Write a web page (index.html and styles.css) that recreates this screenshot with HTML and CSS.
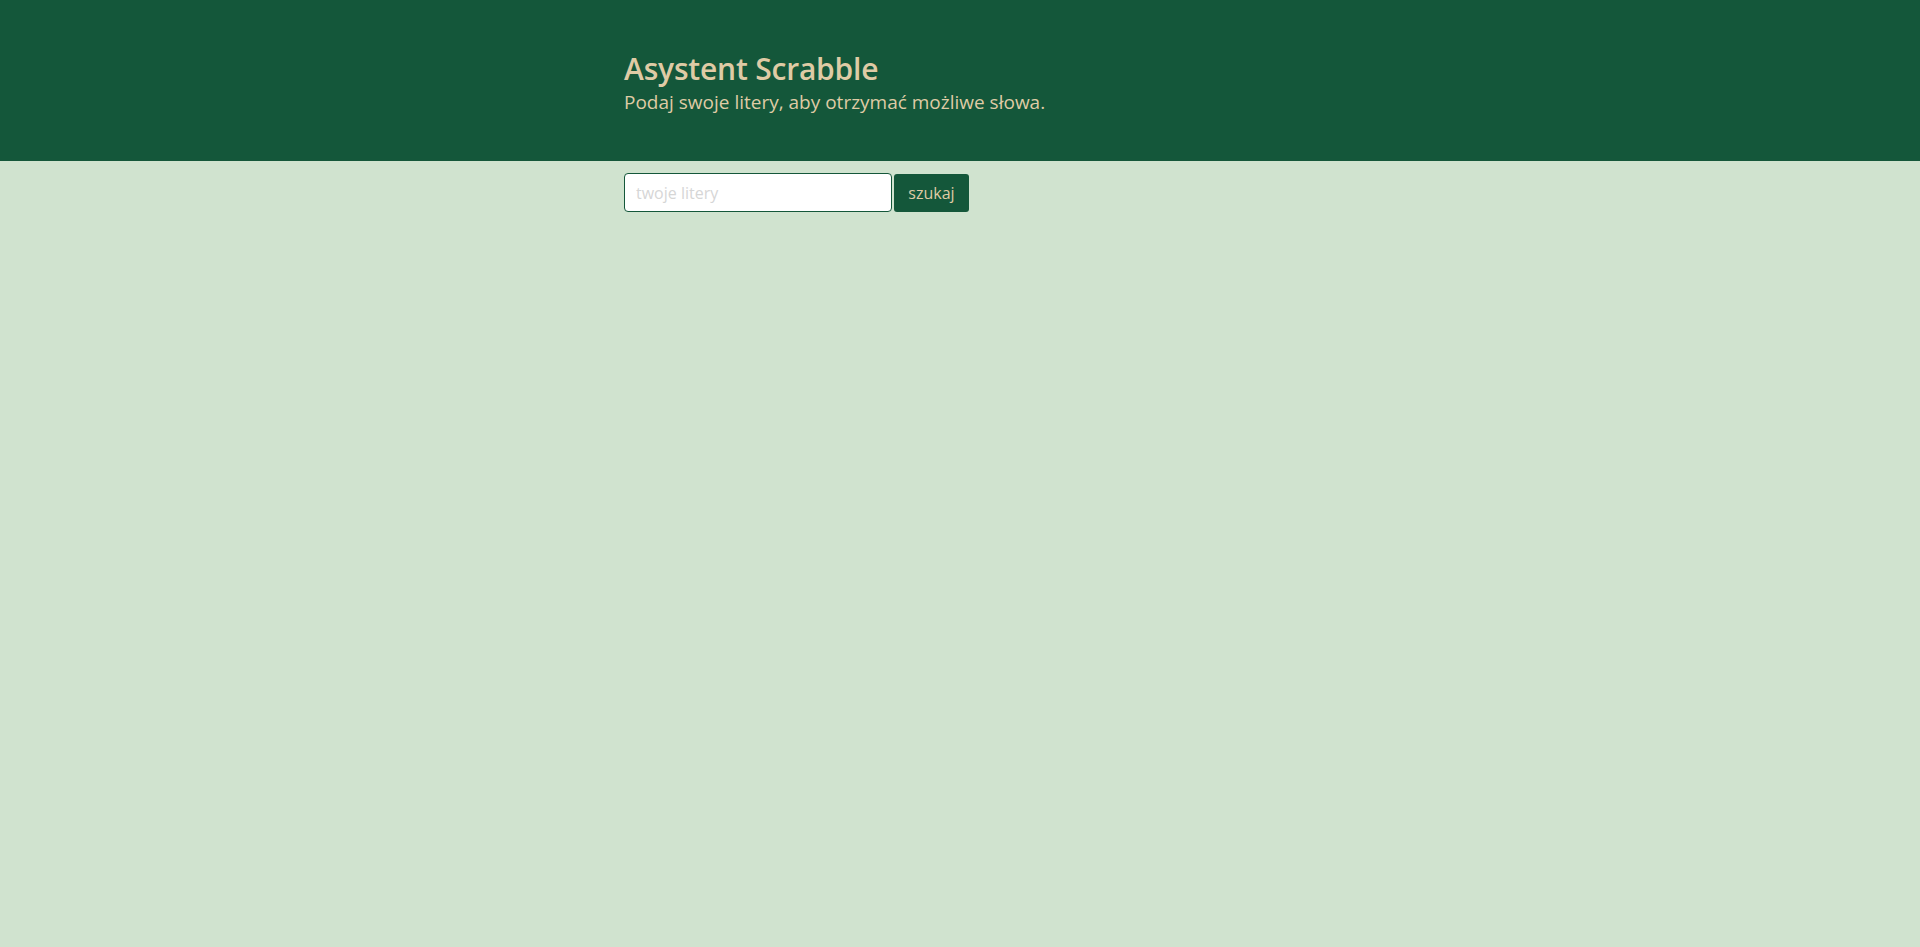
FILE: index.html
```html
<!DOCTYPE html>
<html lang="pl">
<head>
<meta charset="utf-8">
<title>Asystent Scrabble</title>
<link rel="stylesheet" href="styles.css">
</head>
<body>
<header class="hero">
  <div class="wrap">
    <h1 class="title">Asystent Scrabble</h1>
    <p class="subtitle">Podaj swoje litery, aby otrzymać możliwe słowa.</p>
  </div>
</header>
<main class="wrap">
  <form class="search">
    <input class="search-input" type="text" placeholder="twoje litery">
    <button class="search-btn" type="button">szukaj</button>
  </form>
</main>
</body>
</html>
```
FILE: styles.css
```css
html, body {
  margin: 0;
  padding: 0;
  height: 100%;
}
body {
  background: #d0e3cf;
  font-family: "Open Sans", "Noto Sans", sans-serif;
}
.wrap {
  width: 672px;
  margin: 0 auto;
}
.hero {
  background: #14573a;
  color: #dfcba5;
  height: 161px;
  box-sizing: border-box;
  padding-top: 49px;
}
.title {
  margin: 0;
  font-size: 30px;
  font-weight: 600;
  line-height: 40px;
  letter-spacing: -0.2px;
}
.subtitle {
  margin: 0;
  font-size: 19px;
  line-height: 26px;
}
.search {
  display: flex;
  gap: 2px;
  margin-top: 12px;
}
.search-input {
  width: 268px;
  height: 39px;
  box-sizing: border-box;
  border: 1px solid #14573a;
  border-radius: 4px;
  background: #fff;
  padding: 0 11px;
  font-family: inherit;
  font-size: 16px;
  outline: none;
}
.search-input::placeholder {
  color: #d6d6d6;
}
.search-btn {
  width: 75px;
  height: 38px;
  margin-top: 1px;
  border: none;
  border-radius: 3px;
  background: #14573a;
  color: #dfcba5;
  font-family: inherit;
  font-size: 16px;
  padding: 0;
}
```
